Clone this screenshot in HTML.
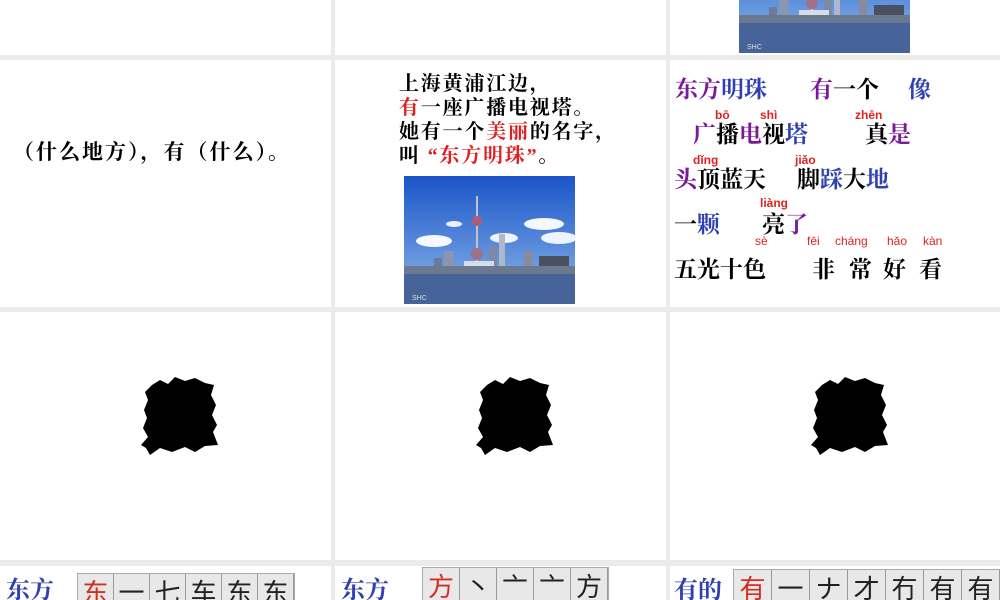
<!DOCTYPE html>
<html><head><meta charset="utf-8"><style>
*{margin:0;padding:0}
html{width:1000px;height:600px;overflow:hidden}
body{width:1000px;height:600px;background:#ebebeb;position:relative;overflow:hidden;font-family:"Liberation Sans","Noto Sans CJK SC",sans-serif}
.p{position:absolute;background:#fff;overflow:hidden}
.a{position:absolute;white-space:nowrap}
.k{font-family:"Liberation Serif","Noto Serif CJK SC","Noto Sans CJK SC",serif;font-weight:bold}
.py{position:absolute;color:#d22;font-size:12px;font-weight:bold;font-family:"Liberation Sans",sans-serif;white-space:nowrap;line-height:14px}
.pu{color:#7a1a9a}.bl{color:#3040b0}.rd{color:#e02020}
.c{position:absolute;font-size:23px;line-height:24px}
.cells{position:absolute;display:flex;background:#e8e8e8;border:1px solid #aaa}
.cells span{display:block;height:40px;border-right:1px solid #999;text-align:center;font-size:26px;line-height:36px;color:#222;font-family:"Noto Sans CJK SC",sans-serif}
</style></head><body>
<svg width="0" height="0" style="position:absolute"><defs>
<g id="img">
<defs><linearGradient id="sky" x1="0" y1="0" x2="0" y2="1"><stop offset="0" stop-color="#1a55c8"/><stop offset="1" stop-color="#8db8ea"/></linearGradient></defs>
<rect width="171" height="128" fill="url(#sky)"/>
<ellipse cx="30" cy="65" rx="18" ry="6" fill="#f4f8ff"/><ellipse cx="140" cy="48" rx="20" ry="6" fill="#f4f8ff"/><ellipse cx="155" cy="62" rx="18" ry="6" fill="#eef4ff"/><ellipse cx="100" cy="62" rx="14" ry="5" fill="#eef4ff"/><ellipse cx="50" cy="48" rx="8" ry="3" fill="#eef"/>
<rect x="72" y="20" width="2" height="70" fill="#c8c0c8"/><circle cx="73" cy="45" r="5" fill="#b05a7a"/><circle cx="73" cy="78" r="6" fill="#a0708a"/>
<rect x="40" y="75" width="10" height="25" fill="#8a96b0"/><rect x="30" y="82" width="8" height="18" fill="#6a7a98"/><rect x="95" y="58" width="6" height="42" fill="#b0b8c8"/><rect x="85" y="70" width="8" height="30" fill="#7a8aa8"/><rect x="120" y="75" width="8" height="25" fill="#8a8a9a"/><rect x="135" y="80" width="30" height="20" fill="#4a5060"/><rect x="60" y="85" width="30" height="15" fill="#d8dce8"/><rect x="0" y="90" width="171" height="10" fill="#6a7890"/>
<rect y="98" width="171" height="30" fill="#46649a"/>
<text x="8" y="124" font-size="7" fill="#ddd" font-family="Liberation Sans">SHC</text>
</g></defs></svg>

<div class="p" style="left:0;top:0;width:331px;height:55px"></div>
<div class="p" style="left:335px;top:0;width:331px;height:55px"></div>
<div class="p" style="left:670px;top:0;width:330px;height:55px"><svg style="position:absolute;left:69px;top:-75px" width="171" height="128"><use href="#img"/></svg></div>

<div class="p" style="left:0;top:60px;width:331px;height:247px">
<div class="a k" style="left:13px;top:76px;font-size:21px;letter-spacing:2px">（什么地方），有（什么）。</div></div>
<div class="p" style="left:335px;top:60px;width:331px;height:247px">
<div class="a k" style="left:64px;top:12px;font-size:20px;line-height:24px;letter-spacing:1.8px">上海黄浦江边，<br><span class="rd">有</span>一座广播电视塔。<br>她有一个<span class="rd">美丽</span>的名字，<br>叫 <span class="rd">“东方明珠”</span>。</div>
<svg style="position:absolute;left:69px;top:116px" width="171" height="128"><use href="#img"/></svg></div>
<div class="p" style="left:670px;top:60px;width:330px;height:247px">
<div class="a k c" style="left:5px;top:18px"><span class="pu">东方</span><span class="bl">明珠</span></div>
<div class="a k c" style="left:140px;top:18px"><span class="pu">有</span>一个</div>
<div class="a k c" style="left:238px;top:18px"><span class="bl">像</span></div>
<div class="py" style="left:45px;top:48px">bō</div><div class="py" style="left:90px;top:48px">shì</div><div class="py" style="left:185px;top:48px">zhēn</div>
<div class="a k c" style="left:23px;top:63px"><span class="pu">广</span>播<span class="pu">电</span>视<span class="bl">塔</span></div>
<div class="a k c" style="left:195px;top:63px">真<span class="pu">是</span></div>
<div class="py" style="left:23px;top:93px">dǐng</div><div class="py" style="left:125px;top:93px">jiǎo</div>
<div class="a k c" style="left:4px;top:108px"><span class="pu">头</span>顶蓝天</div>
<div class="a k c" style="left:127px;top:108px">脚<span class="bl">踩</span>大<span class="bl">地</span></div>
<div class="py" style="left:90px;top:136px">liàng</div>
<div class="a k c" style="left:4px;top:153px">一<span class="bl">颗</span></div>
<div class="a k c" style="left:92px;top:153px">亮<span class="pu">了</span></div>
<div class="py" style="left:85px;top:174px;font-weight:normal">sè</div>
<div class="py" style="left:137px;top:174px;font-weight:normal">fēi</div>
<div class="py" style="left:165px;top:174px;font-weight:normal">cháng</div>
<div class="py" style="left:217px;top:174px;font-weight:normal">hǎo</div>
<div class="py" style="left:253px;top:174px;font-weight:normal">kàn</div>
<div class="a k c" style="left:4px;top:198px">五光十色</div>
<div class="a k c" style="left:142px;top:198px">非</div>
<div class="a k c" style="left:179px;top:198px">常</div>
<div class="a k c" style="left:213px;top:198px">好</div>
<div class="a k c" style="left:249px;top:198px">看</div>
</div>

<div class="p" style="left:0;top:312px;width:331px;height:248px"></div>
<div class="p" style="left:335px;top:312px;width:331px;height:248px"></div>
<div class="p" style="left:670px;top:312px;width:330px;height:248px"></div>
<svg style="position:absolute;left:0;top:0" width="1000" height="600">
<g id="blob"><path d="M152 385 L160 380 L168 384 L175 377 L185 381 L195 378 L205 383 L214 385 L211 395 L216 405 L212 415 L217 425 L213 432 L218 445 L205 446 L195 452 L185 447 L172 452 L160 448 L150 455 L146 448 L141 445 L148 437 L143 428 L147 418 L144 410 L148 400 L145 392Z" fill="#000"/></g>
<use href="#blob" x="335"/><use href="#blob" x="670"/>
</svg>

<div class="p" style="left:0;top:566px;width:331px;height:34px">
<div class="a k" style="left:6px;top:4px;font-size:24px;color:#3040b0">东方</div>
<div class="cells" style="left:77px;top:7px"><span style="width:35px;color:#d03020">东</span><span style="width:35px">一</span><span style="width:35px">七</span><span style="width:35px">车</span><span style="width:35px">东</span><span style="width:35px">东</span></div></div>
<div class="p" style="left:335px;top:566px;width:331px;height:34px">
<div class="a k" style="left:6px;top:4px;font-size:24px;color:#3040b0">东方</div>
<div class="cells" style="left:87px;top:1px"><span style="width:36px;color:#d03020">方</span><span style="width:36px">丶</span><span style="width:36px">亠</span><span style="width:36px">亠</span><span style="width:36px">方</span></div></div>
<div class="p" style="left:670px;top:566px;width:330px;height:34px">
<div class="a k" style="left:4px;top:4px;font-size:24px;color:#3040b0">有的</div>
<div class="cells" style="left:63px;top:3px"><span style="width:37px;color:#d03020">有</span><span style="width:37px">一</span><span style="width:37px">ナ</span><span style="width:37px">才</span><span style="width:37px">冇</span><span style="width:37px">有</span><span style="width:37px">有</span></div></div>
</body></html>
